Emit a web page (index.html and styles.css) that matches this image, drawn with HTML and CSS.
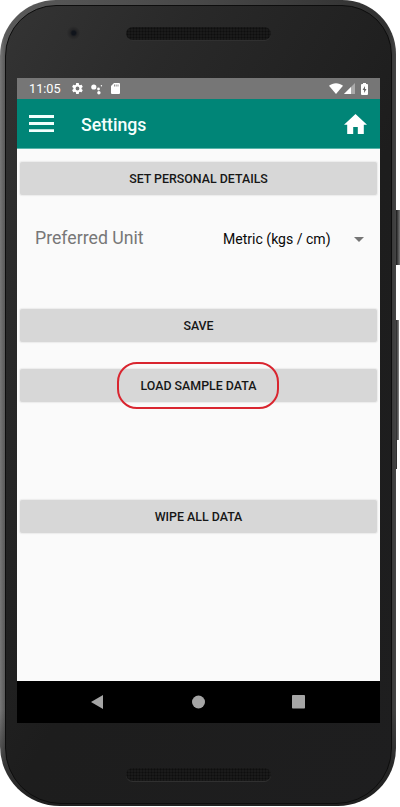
FILE: index.html
```html
<!DOCTYPE html>
<html lang="en">
<head>
<meta charset="utf-8">
<title>Settings</title>
<link rel="stylesheet" href="styles.css">
</head>
<body>
<div class="device">
  <span class="side-key power"></span>
  <span class="side-key volume"></span>
  <div class="phone">
    <div class="face">
      <div class="top-bezel">
        <span class="camera"></span>
        <span class="speaker"></span>
      </div>
      <div class="screen">
        <div class="status">
          <span class="time">11:05</span>
          <svg class="gear" viewBox="0 0 24 24" width="13" height="13"><path fill="#fff" fill-rule="evenodd" d="M19.4 13a7.500 7.500 0 0 0 0-2l2.100-1.600c.2-.2.3-.4.1-.7l-2-3.400c-.1-.2-.4-.3-.6-.2l-2.500 1a7.300 7.300 0 0 0-1.700-1L14.400 2.400c0-.2-.2-.4-.5-.4h-4c-.2 0-.4.2-.5.4L9 5.100c-.6.3-1.200.6-1.700 1l-2.500-1c-.2-.1-.5 0-.6.2l-2 3.400c-.1.3-.1.5.1.7L4.500 11a7.500 7.500 0 0 0 0 2l-2.200 1.600c-.2.2-.2.4-.1.700l2 3.400c.1.200.4.300.6.200l2.500-1c.5.400 1.100.700 1.700 1l.4 2.700c.1.200.3.400.5.400h4c.3 0 .5-.2.5-.4l.4-2.700c.6-.3 1.200-.6 1.700-1l2.500 1c.2.100.5 0 .6-.2l2-3.400c.2-.3.1-.5-.1-.7zM12 15.500a3.500 3.500 0 1 1 0-7 3.500 3.500 0 0 1 0 7z"/></svg>
          <svg class="dots" viewBox="0 0 12 12" width="12" height="12"><g fill="#fff"><circle cx="2.800" cy="4" r="2.600"/><circle cx="7.500" cy="6" r="1.400"/><circle cx="7.900" cy="9.700" r="1.700"/><circle cx="10.400" cy="2.800" r=".7"/></g></svg>
          <svg class="card" viewBox="0 0 9 11" width="9" height="11"><path fill="#fff" d="M3 0h5q1 0 1 1v9q0 1-1 1H1q-1 0-1-1V3z"/><path stroke="#777" stroke-width=".8" d="M3.500 1.500v2M5.200 1.500v2M7 1.500v2"/></svg>
          <svg class="wifi" viewBox="0 0 14 11" width="14" height="11"><path fill="#fff" d="M0 2.700C4-.7 10-.7 14 2.700L7 11z"/></svg>
          <svg class="signal" viewBox="0 0 11 11" width="11" height="11"><path fill="#aaa" d="M11 0v11H0z"/><path fill="#fff" d="M7 4v7H0z"/></svg>
          <svg class="battery" viewBox="0 0 7 12" width="7" height="12"><path fill="#fff" d="M2 0h3v1h1q1 0 1 1v9q0 1-1 1H1q-1 0-1-1V2q0-1 1-1h1z"/><path fill="#666" d="M4 3 1.600 7h1.500v3l2.400-4H4z"/></svg>
        </div>
        <header class="appbar">
          <svg class="menu" viewBox="0 0 25 17" width="25" height="17"><path stroke="#f2fffd" stroke-width="2.800" d="M0 1.500h25M0 8.500h25M0 15.600h25"/></svg>
          <h1>Settings</h1>
          <svg class="home" viewBox="0 0 23 20" width="23" height="20"><path fill="#fff" d="M11.500 0 0 10.800h3.200V20h6v-7h4.600v7h6v-9.200H23z"/></svg>
        </header>
        <main>
          <button class="btn">SET PERSONAL DETAILS</button>
          <div class="unit-row">
            <span class="label">Preferred Unit</span>
            <span class="value">Metric (kgs / cm)</span>
            <span class="caret"></span>
          </div>
          <button class="btn">SAVE</button>
          <button class="btn load">LOAD SAMPLE DATA<span class="highlight"></span></button>
          <button class="btn wipe">WIPE ALL DATA</button>
        </main>
        <nav>
          <svg viewBox="0 0 14 14" width="14" height="14"><path fill="#a5a5a5" d="M0 7 12 0v14z"/></svg>
          <svg viewBox="0 0 14 14" width="14" height="14"><circle cx="6.500" cy="7" r="6.500" fill="#a5a5a5"/></svg>
          <svg viewBox="0 0 14 14" width="14" height="14"><rect width="13" height="13.500" rx=".8" fill="#a5a5a5"/></svg>
        </nav>
      </div>
      <div class="bottom-bezel"><span class="speaker"></span></div>
    </div>
  </div>
</div>
</body>
</html>
```
FILE: styles.css
```css
* { box-sizing: border-box; }
body {
  margin: 0;
  background: #fff;
  font-family: Roboto, "Liberation Sans", sans-serif;
  overflow: hidden;
}
.device { position: relative; width: 400px; height: 807px; }
.side-key { position: absolute; }
.power { left: 394px; top: 210px; width: 6px; height: 55px; background: linear-gradient(90deg, #222 40%, #777); }
.volume { left: 394px; top: 320px; width: 5px; height: 120px; background: linear-gradient(90deg, #222 40%, #888); }
.volume::after { content: ""; position: absolute; left: 0; top: 120px; width: 3px; height: 29px; background: #333; }
.phone {
  position: relative;
  width: 396px;
  height: 806px;
  padding: 5px 4px 2px 5px;
  border-radius: 56px 54px 58px 60px;
  background:
    linear-gradient(180deg, transparent 88%, #202020 99%),
    linear-gradient(90deg, #777 0, #5a5a5a 1.200%, #484848 50%, #303030 98%, #444 100%);
}
.face {
  height: 799px;
  border: 1px solid #0d0d0d;
  border-radius: 51px 50px 56px 56px;
  background: linear-gradient(120deg, #343434 0, #292929 22%, #1d1d1d 55%, #1e1e1f 100%);
  padding: 0 10px 0 11px;
}
.top-bezel {
  height: 72px;
  padding: 20px 0 0 49px;
  display: flex;
  align-items: flex-start;
}
.camera {
  width: 14px;
  height: 14px;
  border-radius: 50%;
  background: radial-gradient(circle at 55% 50%, #10141b 0 18%, #242425 34%, #303030 70%);
}
.speaker {
  width: 145px;
  height: 13px;
  border-radius: 7px;
  background-color: #1a1a1a;
  background-image: radial-gradient(circle, #0e0e0e 0.700px, transparent 1.300px);
  background-size: 3px 3px;
  box-shadow: 0 1px 0 #303030;
}
.top-bezel .speaker { margin: 1px 0 0 46px; }
.screen {
  width: 363px;
  height: 645px;
  background: #fafafa;
  display: flex;
  flex-direction: column;
}
.status {
  height: 21px;
  flex: none;
  background: #767676;
  display: flex;
  align-items: center;
  padding: 0 12px;
  color: #fff;
}
.time { font-size: 12.700px; line-height: 21px; width: 40px; }
.dots { margin-left: 7px; }
.card { margin-left: 8px; }
.gear { margin-left: 2px; }
.wifi { margin-left: auto; }
.signal { margin-left: 1px; }
.battery { margin-left: 6px; }
.appbar {
  height: 50px;
  flex: none;
  background: #008577;
  border-bottom: 1px solid #58b4aa;
  display: flex;
  align-items: center;
  padding: 0 13px 0 12px;
}
.appbar h1 {
  margin: 3px 0 0 27px;
  color: #f5fffd;
  font-size: 17.700px;
  font-weight: 500;
  line-height: 22px;
}
.home { margin-left: auto; }
main { flex: 1; padding: 13px 3px 0; display: flex; flex-direction: column; }
.btn {
  position: relative;
  height: 33px;
  flex: none;
  border: 0;
  border-radius: 2px;
  padding: 0;
  background: #d7d7d7;
  box-shadow: 0 0 1px 1px #ececec;
  color: #161616;
  font: 500 12.400px/33px Roboto, "Liberation Sans", sans-serif;
}
.unit-row {
  height: 114px;
  display: flex;
  align-items: flex-start;
  padding: 32px 13px 0 15px;
}
.label { width: 188px; color: #777; font-size: 17.700px; line-height: 22px; }
.value { color: #080808; font-size: 14.050px; line-height: 24px; }
.caret {
  margin: 10px 0 0 auto;
  border: 5px solid transparent;
  border-top-color: #757575;
  border-bottom: 0;
}
.load { margin-top: 27px; }
.wipe { margin-top: 98px; }
.highlight {
  position: absolute;
  left: 97px;
  top: -7px;
  width: 162px;
  height: 47px;
  border: 2px solid #d9252f;
  border-radius: 20px;
}
nav {
  height: 42px;
  flex: none;
  background: #000;
  display: flex;
  justify-content: space-between;
  align-items: center;
  padding: 0 74px;
}
.bottom-bezel { padding: 45px 0 0 109px; display: flex; }
```
